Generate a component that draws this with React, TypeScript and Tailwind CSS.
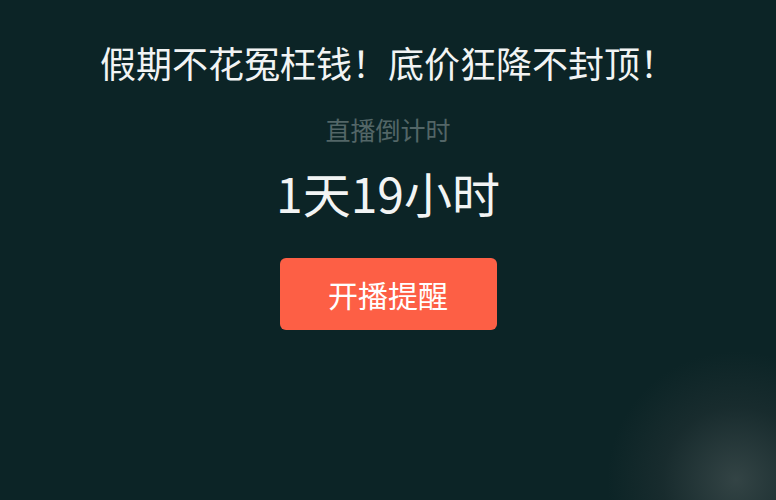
export default function App() {
  return (
    <div
      className="relative h-[500px] w-[776px] overflow-hidden bg-[#0c2426] text-white"
      style={{ fontFamily: '"Noto Sans CJK SC", "Noto Sans", sans-serif' }}
    >
      <div className="flex flex-col items-center pt-[44px]">
        <h1 className="text-[36px] leading-none font-normal text-[#f2f4f4]">
          假期不花冤枉钱！底价狂降不封顶！
        </h1>
        <p className="mt-[37px] text-[25px] leading-none text-[#536667]">直播倒计时</p>
        <p className="mt-[26px] text-[48px] leading-none text-[#f2f4f4]">1天19小时</p>
        <button
          type="button"
          className="mt-[42px] flex h-[72px] w-[217px] items-center justify-center rounded-[6px] bg-[#fd5f45] text-[30px] leading-none text-white"
        >
          开播提醒
        </button>
      </div>
      {/* blurred light in the bottom corner */}
      <div className="pointer-events-none absolute -bottom-[110px] -right-[90px] h-[260px] w-[260px] rounded-full bg-[radial-gradient(circle,rgba(110,115,115,0.4)_0%,rgba(60,66,68,0.25)_40%,rgba(12,36,38,0)_70%)]" />
    </div>
  );
}
